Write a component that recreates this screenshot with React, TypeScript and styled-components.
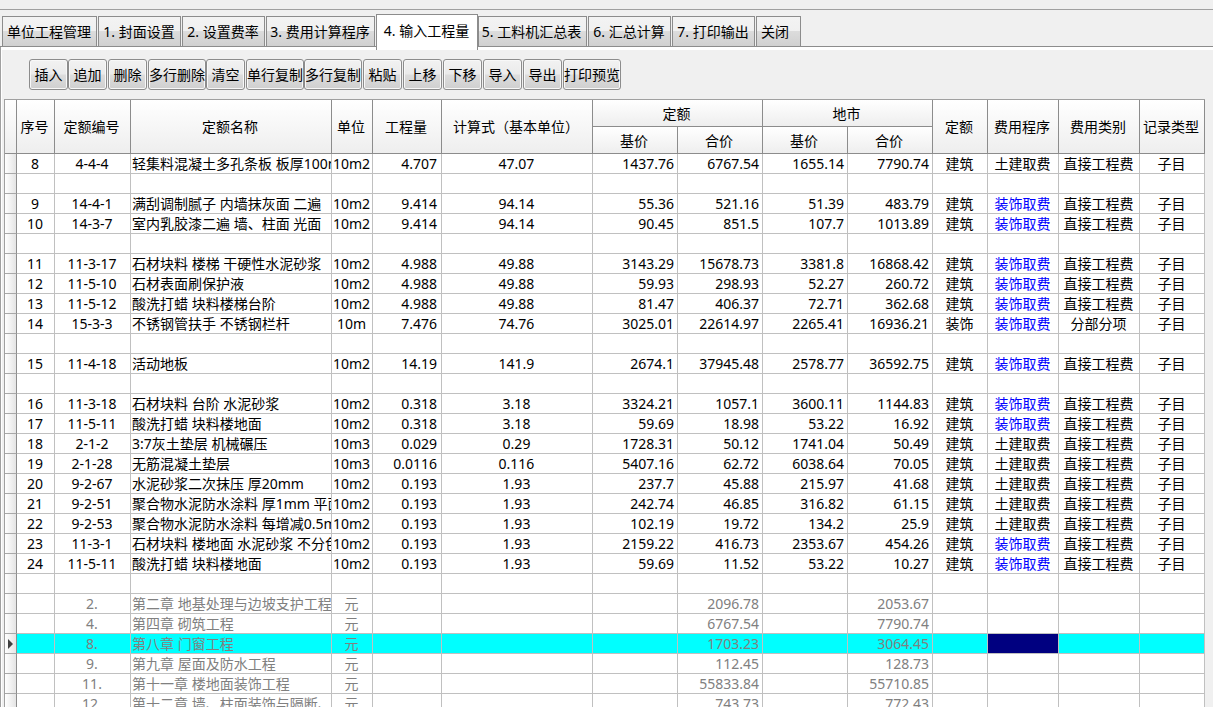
import React from "react";
import styled, { createGlobalStyle } from "styled-components";

const GlobalStyle = createGlobalStyle`
  html, body {
    margin: 0;
    height: 100%;
    overflow: hidden;
    background: #f0f0f0;
    font-family: "Noto Sans", "Noto Sans CJK SC", sans-serif;
    font-size: 14px;
    color: #000;
  }
`;

const Page = styled.div`
  height: 707px;
  overflow: hidden;
  background: #f0f0f0;
`;

const TopBar = styled.div`
  height: 9px;
  border-bottom: 1px solid #a0a0a0;
`;

const TabStrip = styled.div`
  display: flex;
  gap: 1px;
  height: 36px;
  padding-left: 2px;
  align-items: flex-end;
  border-bottom: 1px solid #8c8c8c;
`;

const Tab = styled.div<{ $w: number; $active?: boolean; $pad?: number }>`
  box-sizing: border-box;
  flex: none;
  width: ${(p) => p.$w}px;
  height: ${(p) => (p.$active ? 36 : 31)}px;
  margin-bottom: ${(p) => (p.$active ? -4 : -1)}px;
  margin-right: ${(p) => (p.$active ? -1 : 0)}px;
  position: relative;
  z-index: ${(p) => (p.$active ? 2 : 1)};
  display: flex;
  align-items: center;
  justify-content: center;
  white-space: nowrap;
  overflow: hidden;
  border: 1px solid #8c8c8c;
  border-bottom: ${(p) => (p.$active ? "none" : "1px solid #8c8c8c")};
  background: ${(p) =>
    p.$active ? "#fff" : "linear-gradient(#f3f3f3 0, #f0f0f0 48%, #dcdcdc 50%, #d0d0d0 100%)"};
  padding-bottom: ${(p) => (p.$active ? 5 : 2)}px;
  padding-right: ${(p) => p.$pad ?? 1}px;
`;

const Panel = styled.div`
  border-left: 1px solid #a0a0a0;
  box-shadow: inset 1px 3px 0 #fff;
  height: 660px;
  overflow: hidden;
`;

const Toolbar = styled.div`
  display: flex;
  height: 52px;
  box-sizing: border-box;
  padding: 12px 0 0 28px;
`;

const ToolButton = styled.div<{ $w: number; $gap: number }>`
  box-sizing: border-box;
  flex: none;
  width: ${(p) => p.$w}px;
  height: 31px;
  margin-right: ${(p) => p.$gap}px;
  padding-bottom: 2px;
  display: flex;
  align-items: center;
  justify-content: center;
  white-space: nowrap;
  overflow: hidden;
  border: 1px solid #8c8c8c;
  border-radius: 3px;
  box-shadow: inset 0 0 0 1px #f8f8f8;
  background: linear-gradient(#f2f2f2 0, #ebebeb 48%, #dddddd 52%, #cfcfcf 100%);
`;

const GridWrap = styled.div`
  padding-left: 3px;
`;

const Grid = styled.table`
  table-layout: fixed;
  width: 1201px;
  border-collapse: separate;
  border-spacing: 0;
  border-left: 1px solid #a0a0a0;
  border-top: 1px solid #a0a0a0;
`;

const Head = styled.th<{ $h: number; $lift?: boolean }>`
  box-sizing: border-box;
  height: ${(p) => p.$h}px;
  padding: 0 2px ${(p) => (p.$lift ? 2 : 0)}px 0;
  font-weight: normal;
  text-align: center;
  white-space: nowrap;
  overflow: hidden;
  border-right: 1px solid #8c8c8c;
  border-bottom: 1px solid #8c8c8c;
  background: linear-gradient(#ffffff, #eeeeee);
`;

const RowMark = styled.td`
  box-sizing: border-box;
  height: 20px;
  padding: 0;
  border-right: 1px solid #8c8c8c;
  border-bottom: 1px solid #a8a8a8;
  background: linear-gradient(90deg, #ffffff, #e4e4e4);
  vertical-align: middle;
`;

const Arrow = styled.div`
  width: 0;
  height: 0;
  margin-left: 3px;
  border-left: 5px solid #404040;
  border-top: 5px solid transparent;
  border-bottom: 5px solid transparent;
`;

const Cell = styled.td<{
  $align?: "left" | "center" | "right";
  $pad?: number;
  $muted?: boolean;
  $picked?: boolean;
  $blue?: boolean;
  $navy?: boolean;
}>`
  box-sizing: border-box;
  height: 20px;
  line-height: 19px;
  padding: 0 ${(p) => (p.$align === "right" ? p.$pad ?? 3 : 1)}px 0 ${(p) => (p.$align === "left" ? 1 : 0)}px;
  text-align: ${(p) => p.$align ?? "center"};
  white-space: nowrap;
  overflow: hidden;
  border-right: 1px solid #c0c0c0;
  border-bottom: 1px solid #c0c0c0;
  color: ${(p) => (p.$blue ? "#0000ff" : p.$muted ? "#808080" : "#000")};
  background: ${(p) => (p.$navy ? "#000080" : p.$picked ? "#00ffff" : "#fff")};
`;

const tabs: { label: string; w: number; active?: boolean; pad?: number }[] = [
  { label: "单位工程管理", w: 95 },
  { label: "1. 封面设置", w: 83 },
  { label: "2. 设置费率", w: 83 },
  { label: "3. 费用计算程序", w: 109 },
  { label: "4. 输入工程量", w: 102, active: true },
  { label: "5. 工料机汇总表", w: 109, pad: 2 },
  { label: "6. 汇总计算", w: 83 },
  { label: "7. 打印输出", w: 83 },
  { label: "关闭", w: 45, pad: 7 },
];

const buttons = [
  { label: "插入", w: 39, gap: 0 },
  { label: "追加", w: 39, gap: 1 },
  { label: "删除", w: 39, gap: 1 },
  { label: "多行删除", w: 58, gap: 0 },
  { label: "清空", w: 39, gap: 1 },
  { label: "单行复制", w: 58, gap: 0 },
  { label: "多行复制", w: 58, gap: 1 },
  { label: "粘贴", w: 39, gap: 1 },
  { label: "上移", w: 39, gap: 1 },
  { label: "下移", w: 39, gap: 1 },
  { label: "导入", w: 39, gap: 1 },
  { label: "导出", w: 39, gap: 1 },
  { label: "打印预览", w: 58, gap: 0 },
];

const columns = [12, 38, 76, 201, 41, 69, 151, 85, 85, 85, 85, 55, 71, 81, 65];

type Item = {
  seq: string;
  code: string;
  name: string;
  unit: string;
  qty: string;
  formula: string;
  base: string;
  total: string;
  mBase: string;
  mTotal: string;
  kind?: string;
  fee?: string;
  cat?: string;
};

const item = (
  seq: string,
  code: string,
  name: string,
  unit: string,
  qty: string,
  formula: string,
  base: string,
  total: string,
  mBase: string,
  mTotal: string,
  kind = "建筑",
  fee = "装饰取费",
  cat = "直接工程费"
): Item => ({ seq, code, name, unit, qty, formula, base, total, mBase, mTotal, kind, fee, cat });

const items: (Item | null)[] = [
  item("8", "4-4-4", "轻集料混凝土多孔条板 板厚100mm", "10m2", "4.707", "47.07", "1437.76", "6767.54", "1655.14", "7790.74", "建筑", "土建取费"),
  null,
  item("9", "14-4-1", "满刮调制腻子 内墙抹灰面 二遍", "10m2", "9.414", "94.14", "55.36", "521.16", "51.39", "483.79"),
  item("10", "14-3-7", "室内乳胶漆二遍 墙、柱面 光面", "10m2", "9.414", "94.14", "90.45", "851.5", "107.7", "1013.89"),
  null,
  item("11", "11-3-17", "石材块料 楼梯 干硬性水泥砂浆", "10m2", "4.988", "49.88", "3143.29", "15678.73", "3381.8", "16868.42"),
  item("12", "11-5-10", "石材表面刷保护液", "10m2", "4.988", "49.88", "59.93", "298.93", "52.27", "260.72"),
  item("13", "11-5-12", "酸洗打蜡 块料楼梯台阶", "10m2", "4.988", "49.88", "81.47", "406.37", "72.71", "362.68"),
  item("14", "15-3-3", "不锈钢管扶手 不锈钢栏杆", "10m", "7.476", "74.76", "3025.01", "22614.97", "2265.41", "16936.21", "装饰", "装饰取费", "分部分项"),
  null,
  item("15", "11-4-18", "活动地板", "10m2", "14.19", "141.9", "2674.1", "37945.48", "2578.77", "36592.75"),
  null,
  item("16", "11-3-18", "石材块料 台阶 水泥砂浆", "10m2", "0.318", "3.18", "3324.21", "1057.1", "3600.11", "1144.83"),
  item("17", "11-5-11", "酸洗打蜡 块料楼地面", "10m2", "0.318", "3.18", "59.69", "18.98", "53.22", "16.92"),
  item("18", "2-1-2", "3:7灰土垫层 机械碾压", "10m3", "0.029", "0.29", "1728.31", "50.12", "1741.04", "50.49", "建筑", "土建取费"),
  item("19", "2-1-28", "无筋混凝土垫层", "10m3", "0.0116", "0.116", "5407.16", "62.72", "6038.64", "70.05", "建筑", "土建取费"),
  item("20", "9-2-67", "水泥砂浆二次抹压 厚20mm", "10m2", "0.193", "1.93", "237.7", "45.88", "215.97", "41.68", "建筑", "土建取费"),
  item("21", "9-2-51", "聚合物水泥防水涂料 厚1mm 平面", "10m2", "0.193", "1.93", "242.74", "46.85", "316.82", "61.15", "建筑", "土建取费"),
  item("22", "9-2-53", "聚合物水泥防水涂料 每增减0.5mm", "10m2", "0.193", "1.93", "102.19", "19.72", "134.2", "25.9", "建筑", "土建取费"),
  item("23", "11-3-1", "石材块料 楼地面 水泥砂浆 不分色", "10m2", "0.193", "1.93", "2159.22", "416.73", "2353.67", "454.26"),
  item("24", "11-5-11", "酸洗打蜡 块料楼地面", "10m2", "0.193", "1.93", "59.69", "11.52", "53.22", "10.27"),
  null,
];

const chapters = [
  { no: "2.", name: "第二章 地基处理与边坡支护工程", total: "2096.78", mTotal: "2053.67" },
  { no: "4.", name: "第四章 砌筑工程", total: "6767.54", mTotal: "7790.74" },
  { no: "8.", name: "第八章 门窗工程", total: "1703.23", mTotal: "3064.45", picked: true },
  { no: "9.", name: "第九章 屋面及防水工程", total: "112.45", mTotal: "128.73" },
  { no: "11.", name: "第十一章 楼地面装饰工程", total: "55833.84", mTotal: "55710.85" },
  { no: "12.", name: "第十二章 墙、柱面装饰与隔断、幕墙工程", total: "743.73", mTotal: "772.43" },
];

function App() {
  return (
    <Page>
      <GlobalStyle />
      <TopBar />
      <TabStrip>
        {tabs.map((t) => (
          <Tab key={t.label} $w={t.w} $active={t.active} $pad={t.pad}>
            {t.label}
          </Tab>
        ))}
      </TabStrip>
      <Panel>
        <Toolbar>
          {buttons.map((b) => (
            <ToolButton key={b.label} $w={b.w} $gap={b.gap}>
              {b.label}
            </ToolButton>
          ))}
        </Toolbar>
        <GridWrap>
          <Grid>
            <colgroup>
              {columns.map((w, i) => (
                <col key={i} width={w} />
              ))}
            </colgroup>
            <thead>
              <tr>
                <Head $h={27} rowSpan={2} />
                <Head $h={27} $lift rowSpan={2}>序号</Head>
                <Head $h={27} $lift rowSpan={2}>定额编号</Head>
                <Head $h={27} $lift rowSpan={2}>定额名称</Head>
                <Head $h={27} $lift rowSpan={2}>单位</Head>
                <Head $h={27} $lift rowSpan={2}>工程量</Head>
                <Head $h={27} $lift rowSpan={2}>计算式（基本单位）</Head>
                <Head $h={27} colSpan={2}>定额</Head>
                <Head $h={27} colSpan={2}>地市</Head>
                <Head $h={27} $lift rowSpan={2}>定额</Head>
                <Head $h={27} $lift rowSpan={2}>费用程序</Head>
                <Head $h={27} $lift rowSpan={2}>费用类别</Head>
                <Head $h={27} $lift rowSpan={2}>记录类型</Head>
              </tr>
              <tr>
                <Head $h={27}>基价</Head>
                <Head $h={27}>合价</Head>
                <Head $h={27}>基价</Head>
                <Head $h={27}>合价</Head>
              </tr>
            </thead>
            <tbody>
              {items.map((r, i) =>
                r ? (
                  <tr key={i}>
                    <RowMark />
                    <Cell>{r.seq}</Cell>
                    <Cell>{r.code}</Cell>
                    <Cell $align="left">{r.name}</Cell>
                    <Cell>{r.unit}</Cell>
                    <Cell $align="right" $pad={4}>{r.qty}</Cell>
                    <Cell>{r.formula}</Cell>
                    <Cell $align="right">{r.base}</Cell>
                    <Cell $align="right">{r.total}</Cell>
                    <Cell $align="right">{r.mBase}</Cell>
                    <Cell $align="right">{r.mTotal}</Cell>
                    <Cell>{r.kind}</Cell>
                    <Cell $blue={r.fee === "装饰取费"}>{r.fee}</Cell>
                    <Cell>{r.cat}</Cell>
                    <Cell>子目</Cell>
                  </tr>
                ) : (
                  <tr key={i}>
                    <RowMark />
                    {columns.slice(1).map((_, c) => (
                      <Cell key={c} />
                    ))}
                  </tr>
                )
              )}
              {chapters.map((c) => (
                <tr key={c.no}>
                  <RowMark>{c.picked && <Arrow />}</RowMark>
                  <Cell $picked={c.picked} />
                  <Cell $muted $picked={c.picked}>{c.no}</Cell>
                  <Cell $muted $picked={c.picked} $align="left">{c.name}</Cell>
                  <Cell $muted $picked={c.picked}>元</Cell>
                  <Cell $picked={c.picked} />
                  <Cell $picked={c.picked} />
                  <Cell $picked={c.picked} />
                  <Cell $muted $picked={c.picked} $align="right">{c.total}</Cell>
                  <Cell $picked={c.picked} />
                  <Cell $muted $picked={c.picked} $align="right">{c.mTotal}</Cell>
                  <Cell $picked={c.picked} />
                  <Cell $navy={c.picked} />
                  <Cell $picked={c.picked} />
                  <Cell $picked={c.picked} />
                </tr>
              ))}
            </tbody>
          </Grid>
        </GridWrap>
      </Panel>
    </Page>
  );
}

export default App;
